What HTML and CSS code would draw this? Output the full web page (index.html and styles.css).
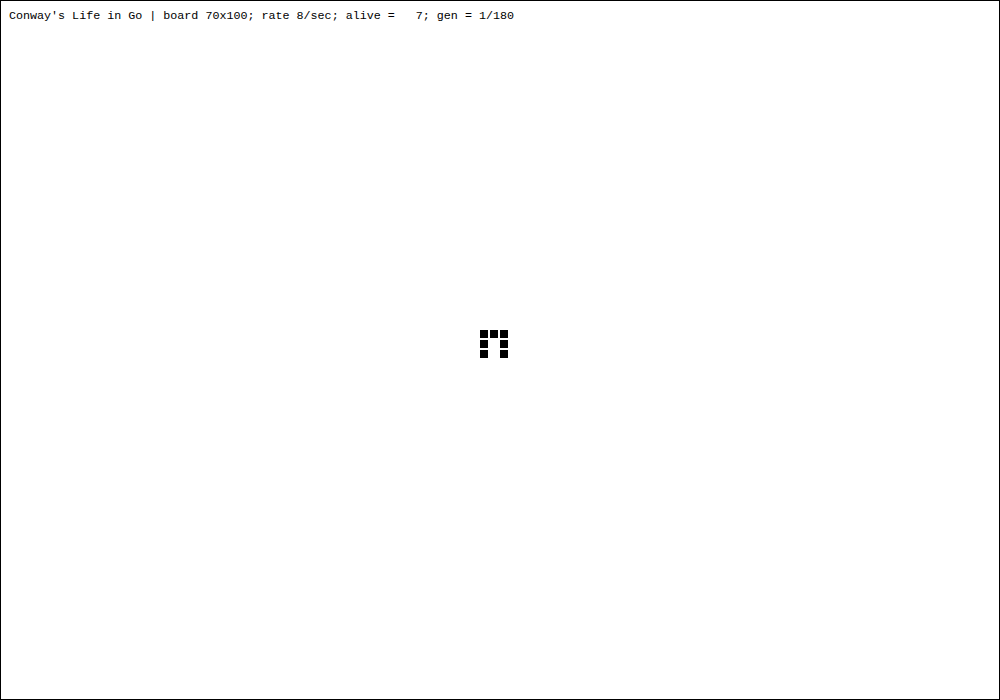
FILE: index.html
```html
<!DOCTYPE html>
<html>
<head>
<meta charset="utf-8">
<title>Conway's Life in Go</title>
<link rel="stylesheet" href="styles.css">
</head>
<body>
<div class="board">
  <div class="status">Conway's Life in Go | board 70x100; rate 8/sec; alive =   7; gen = 1/180</div>
  <div class="cell" style="grid-area: 34 / 49"></div>
  <div class="cell" style="grid-area: 34 / 50"></div>
  <div class="cell" style="grid-area: 34 / 51"></div>
  <div class="cell" style="grid-area: 35 / 49"></div>
  <div class="cell" style="grid-area: 35 / 51"></div>
  <div class="cell" style="grid-area: 36 / 49"></div>
  <div class="cell" style="grid-area: 36 / 51"></div>
</div>
</body>
</html>
```
FILE: styles.css
```css
html, body {
  margin: 0;
  padding: 0;
  background: #fff;
}
.board {
  position: relative;
  width: 1000px;
  height: 700px;
  display: grid;
  grid-template-rows: repeat(70, 10px);
  grid-template-columns: repeat(100, 10px);
  box-shadow: inset 0 0 0 1px #000;
  overflow: hidden;
}
.status {
  position: absolute;
  left: 9px;
  top: 9px;
  font-family: "Liberation Mono", "DejaVu Sans Mono", monospace;
  font-size: 11.7px;
  line-height: 14px;
  color: #000;
  white-space: pre;
}
.cell {
  width: 8px;
  height: 8px;
  background: #000;
}
```
